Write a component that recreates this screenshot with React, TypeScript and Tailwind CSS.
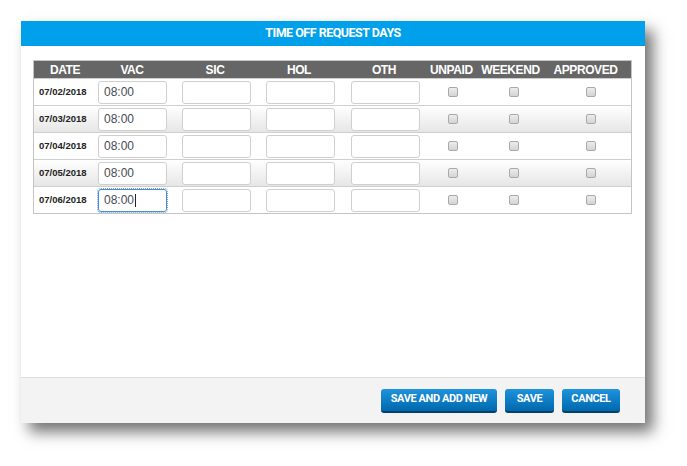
import React from "react";

const dates = ["07/02/2018", "07/03/2018", "07/04/2018", "07/05/2018", "07/06/2018"];

function Box() {
  return (
    <span className="block h-[10px] w-[10px] rounded-[2px] border border-[#a9a9a9] bg-gradient-to-b from-[#ececec] to-[#d4d4d4]" />
  );
}

function Field({ value, focused }: { value?: string; focused?: boolean }) {
  return (
    <div
      className={
        "flex h-[23px] w-[69px] items-center rounded-[3px] border bg-white px-[5px] text-[12px] text-[#4a4a55] " +
        (focused ? "border-[#4a8ed0] outline outline-1 outline-dotted outline-[#7aa9d6]" : "border-[#cfcfcf]")
      }
    >
      {value}
      {focused && <span className="ml-[1px] inline-block h-[13px] w-px bg-[#222]" />}
    </div>
  );
}

export default function App() {
  return (
    <div className="h-[466px] w-[687px] bg-white pl-[21px] pt-[21px] font-['Liberation_Sans',Arial,sans-serif]">
      <div className="flex h-[402px] w-[624px] flex-col bg-white shadow-[8px_9px_14px_rgba(0,0,0,0.55)]">
        <div className="flex h-[25px] items-center justify-center bg-[#01a0ea] font-['Roboto',sans-serif] text-[12.5px] font-bold tracking-[-0.5px] text-white">
          TIME OFF REQUEST DAYS
        </div>
        <div className="flex-1 pl-[12px] pr-[13px] pt-[14px]">
          <div className="w-[599px] border border-[#c4c4c4]">
            <div className="grid h-[17px] grid-cols-[62px_84px_84px_84px_82px_45px_77px_1fr] items-center bg-[#666666] text-[12px] font-bold tracking-[-0.4px] text-white">
              <span className="text-center">DATE</span>
              <span className="pr-[12px] text-center">VAC</span>
              <span className="pr-[14px] text-center">SIC</span>
              <span className="pr-[14px] text-center">HOL</span>
              <span className="pr-[10px] text-center">OTH</span>
              <span className="pr-[4px] text-center">UNPAID</span>
              <span className="pr-[6px] text-center">WEEKEND</span>
              <span className="pr-[12px] text-center">APPROVED</span>
            </div>
            {dates.map((d, i) => (
              <div
                key={d}
                className={
                  "grid h-[27px] grid-cols-[62px_84px_84px_84px_82px_45px_77px_1fr] items-center border-t border-[#cfcfcf] " +
                  (i % 2 === 1 ? "bg-gradient-to-b from-[#ffffff] to-[#e6e6e6]" : "bg-white")
                }
              >
                <span className="pl-[5px] text-[9.5px] font-bold text-[#222]">{d}</span>
                <div className="pl-[2px]">
                  <Field value="08:00" focused={i === 4} />
                </div>
                <div className="pl-[2px]">
                  <Field />
                </div>
                <div className="pl-[2px]">
                  <Field />
                </div>
                <div className="pl-[3px]">
                  <Field />
                </div>
                <div className="flex justify-center">
                  <Box />
                </div>
                <div className="flex justify-center">
                  <Box />
                </div>
                <div className="flex justify-center pr-[2px]">
                  <Box />
                </div>
              </div>
            ))}
          </div>
        </div>
        <div className="flex h-[46px] items-center justify-end gap-[8px] border-t border-[#dedede] bg-[#f3f3f3] pr-[25px] font-['Roboto',sans-serif] text-[11px] font-bold tracking-[-0.4px] text-white">
          <button className="h-[24px] w-[116px] rounded-[3px] border-b-2 border-[#063f66] bg-gradient-to-b from-[#1d93dc] to-[#0068ae]">
            SAVE AND ADD NEW
          </button>
          <button className="h-[24px] w-[49px] rounded-[3px] border-b-2 border-[#063f66] bg-gradient-to-b from-[#1d93dc] to-[#0068ae]">
            SAVE
          </button>
          <button className="h-[24px] w-[58px] rounded-[3px] border-b-2 border-[#063f66] bg-gradient-to-b from-[#1d93dc] to-[#0068ae]">
            CANCEL
          </button>
        </div>
      </div>
    </div>
  );
}
